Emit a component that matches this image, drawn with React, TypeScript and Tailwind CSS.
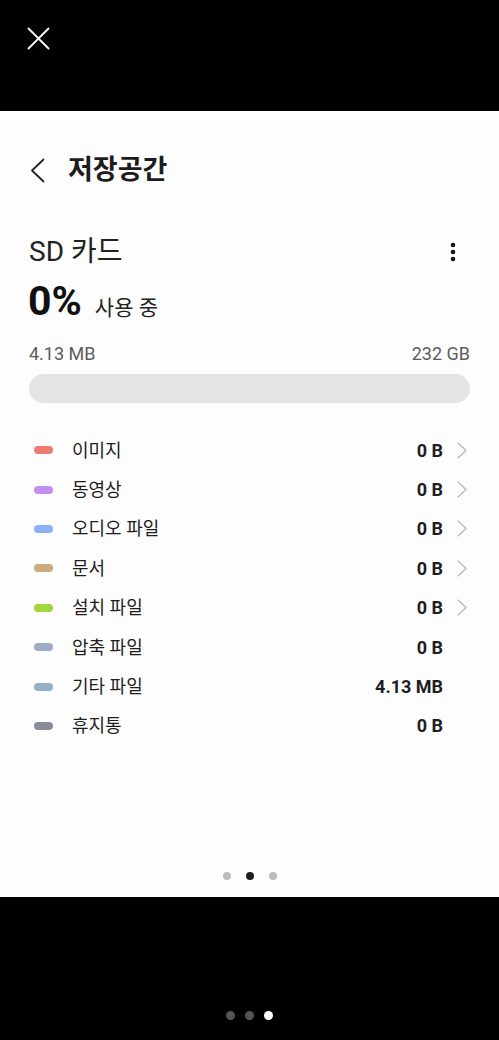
import { EllipsisVertical } from "lucide-react";

const items = [
  { label: "이미지", color: "#ef7b70", value: "0 B", arrow: true },
  { label: "동영상", color: "#c28ef0", value: "0 B", arrow: true },
  { label: "오디오 파일", color: "#8cb1f4", value: "0 B", arrow: true },
  { label: "문서", color: "#c9aa7c", value: "0 B", arrow: true },
  { label: "설치 파일", color: "#a4d63c", value: "0 B", arrow: true },
  { label: "압축 파일", color: "#9cabc6", value: "0 B", arrow: false },
  { label: "기타 파일", color: "#95afc5", value: "4.13 MB", arrow: false },
  { label: "휴지통", color: "#8a8b9b", value: "0 B", arrow: false },
];

const font = { fontFamily: "Roboto, 'Noto Sans CJK KR', sans-serif" };

export default function App() {
  return (
    <div className="flex h-[1040px] w-[499px] flex-col bg-black" style={font}>
      {/* top overlay bar */}
      <div className="h-[111px] shrink-0 pl-[27px] pt-[27px]">
        <svg width="23" height="23" viewBox="0 0 23 23" fill="none" stroke="white" strokeWidth="1.8" strokeLinecap="round">
          <path d="M1.5 1.5 L21.5 21.5 M21.5 1.5 L1.5 21.5" />
        </svg>
      </div>

      {/* screenshot panel */}
      <div className="flex h-[786px] shrink-0 flex-col bg-[#fdfdfd]">
        <div className="mt-[46px] flex h-[26px] items-center pl-[30px]">
          <svg width="15" height="25" viewBox="0 0 15 25" fill="none" stroke="#222" strokeWidth="1.8" strokeLinecap="round" strokeLinejoin="round">
            <path d="M13.5 1.5 L2 12.5 L13.5 23.5" />
          </svg>
          <h1 className="ml-[23px] text-[27px] font-bold leading-none text-[#1c1c1c]">저장공간</h1>
        </div>

        <div className="mt-[52px] flex items-center justify-between pl-[29px] pr-[34px]">
          <div className="text-[28px] leading-[34px] text-[#222]">SD 카드</div>
          <EllipsisVertical size={24} strokeWidth={2.6} className="text-[#111]" />
        </div>

        <div className="mt-[9px] flex items-baseline pl-[28px]">
          <span className="text-[41px] font-bold leading-[46px] text-[#111]">0%</span>
          <span className="ml-[13px] text-[21px] text-[#222]">사용 중</span>
        </div>

        <div className="mt-[18px] flex justify-between px-[29px] text-[18px] leading-[22px] text-[#5c5c5c]">
          <span>4.13 MB</span>
          <span>232 GB</span>
        </div>

        <div className="mx-[29px] mt-[9px] h-[29px] rounded-full bg-[#e4e4e4]" />

        <div className="mt-[28px] flex flex-col">
          {items.map((item) => (
            <div key={item.label} className="flex h-[39.4px] items-center pl-[34px] pr-[32px]">
              <div className="h-[8px] w-[19px] rounded-full" style={{ backgroundColor: item.color }} />
              <span className="ml-[19px] text-[18px] text-[#1e1e1e]">{item.label}</span>
              <span className="ml-auto text-[18px] font-bold text-[#1e1e1e]">{item.value}</span>
              <div className="ml-[14px] flex w-[10px] items-center">
                {item.arrow && (
                  <svg width="10" height="17" viewBox="0 0 10 17" fill="none" stroke="#b3b3b3" strokeWidth="1.1" strokeLinecap="round" strokeLinejoin="round">
                    <path d="M1 1 L9 8.5 L1 16" />
                  </svg>
                )}
              </div>
            </div>
          ))}
        </div>

        <div className="mt-auto mb-[17px] flex justify-center gap-[15px]">
          <div className="h-[8px] w-[8px] rounded-full bg-[#bdbdbd]" />
          <div className="h-[8px] w-[8px] rounded-full bg-[#1e1e1e]" />
          <div className="h-[8px] w-[8px] rounded-full bg-[#bdbdbd]" />
        </div>
      </div>

      {/* bottom page dots */}
      <div className="flex flex-1 justify-center gap-[10px] pt-[114px]">
        <div className="h-[9px] w-[9px] rounded-full bg-[#555]" />
        <div className="h-[9px] w-[9px] rounded-full bg-[#555]" />
        <div className="h-[9px] w-[9px] rounded-full bg-white" />
      </div>
    </div>
  );
}
